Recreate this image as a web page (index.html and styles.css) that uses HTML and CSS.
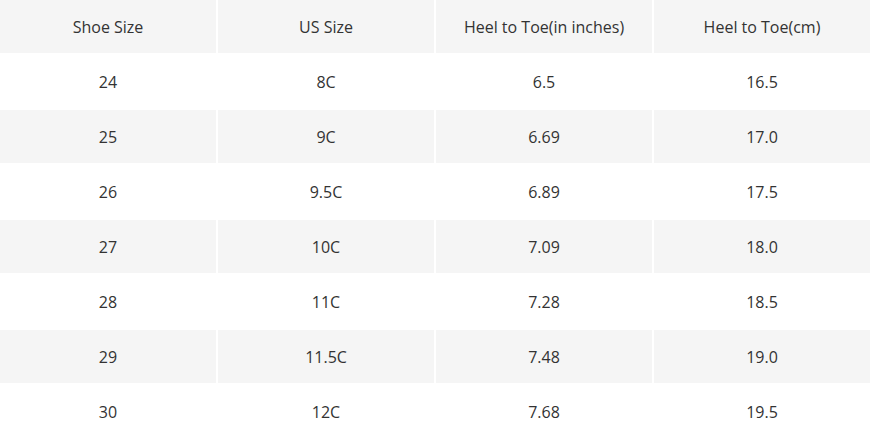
FILE: index.html
```html
<!DOCTYPE html>
<html>
<head>
<meta charset="utf-8">
<link rel="stylesheet" href="styles.css">
</head>
<body>
<div class="table">
  <div class="row head"><div class="cell">Shoe Size</div><div class="cell">US Size</div><div class="cell">Heel to Toe(in inches)</div><div class="cell">Heel to Toe(cm)</div></div>
  <div class="row"><div class="cell">24</div><div class="cell">8C</div><div class="cell">6.5</div><div class="cell">16.5</div></div>
  <div class="row alt"><div class="cell">25</div><div class="cell">9C</div><div class="cell">6.69</div><div class="cell">17.0</div></div>
  <div class="row"><div class="cell">26</div><div class="cell">9.5C</div><div class="cell">6.89</div><div class="cell">17.5</div></div>
  <div class="row alt"><div class="cell">27</div><div class="cell">10C</div><div class="cell">7.09</div><div class="cell">18.0</div></div>
  <div class="row"><div class="cell">28</div><div class="cell">11C</div><div class="cell">7.28</div><div class="cell">18.5</div></div>
  <div class="row alt"><div class="cell">29</div><div class="cell">11.5C</div><div class="cell">7.48</div><div class="cell">19.0</div></div>
  <div class="row"><div class="cell">30</div><div class="cell">12C</div><div class="cell">7.68</div><div class="cell">19.5</div></div>
</div>
</body>
</html>
```
FILE: styles.css
```css
html, body {
  margin: 0;
  padding: 0;
  background: #ffffff;
}
.table {
  display: flex;
  flex-direction: column;
  gap: 2px;
  width: 870px;
  font-family: "Open Sans", "Liberation Sans", sans-serif;
  font-size: 16px;
  color: #333333;
}
.row {
  display: grid;
  grid-template-columns: repeat(4, 216px);
  column-gap: 2px;
  height: 53px;
}
.cell {
  display: flex;
  align-items: center;
  justify-content: center;
}
.head .cell, .alt .cell {
  background: #f5f5f5;
}
```
